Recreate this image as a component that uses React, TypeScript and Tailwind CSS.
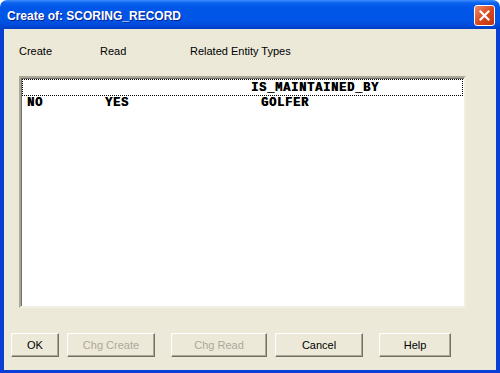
import React from "react";

function Btn({ label, w, disabled }: { label: string; w: string; disabled?: boolean }) {
  return (
    <div
      className={`${w} h-[24px] flex items-center justify-center border border-t-white border-l-white border-r-[#716F64] border-b-[#716F64] shadow-[inset_-1px_-1px_0_#ACA899] bg-[#ECE9D8] text-[11px] ${
        disabled ? "text-[#ACA899]" : "text-black"
      }`}
    >
      {label}
    </div>
  );
}

export default function App() {
  return (
    <div
      className="w-[500px] h-[373px] flex flex-col bg-white"
      style={{ fontFamily: '"Liberation Sans", Arial, sans-serif' }}
    >
      {/* Title bar */}
      <div className="h-[29px] flex items-center justify-between rounded-t-[7px] bg-[linear-gradient(to_bottom,#3D8DFF_0px,#0A62EC_3px,#0056E8_8px,#0055E6_20px,#0048D8_26px,#003CC0_29px)] pl-[7px] pr-[5px]">
        <span className="text-white font-bold text-[12px] pt-[3px] [text-shadow:1px_1px_0_#0A1E8A]">
          Create of: SCORING_RECORD
        </span>
        <div className="w-[21px] h-[21px] mt-[2px] rounded-[3px] border border-white bg-[linear-gradient(135deg,#F08A68,#D6461E_55%,#C0350F)] flex items-center justify-center">
          <svg width="11" height="11" viewBox="0 0 11 11">
            <path d="M1.5 1.5 L9.5 9.5 M9.5 1.5 L1.5 9.5" stroke="white" strokeWidth="2.2" strokeLinecap="square" />
          </svg>
        </div>
      </div>

      {/* Body */}
      <div className="flex-1 flex flex-col bg-[#ECE9D8] border-l-4 border-r-4 border-b-[3px] border-[#0A3FD6]">
        <div className="flex text-[11px] text-black pl-[15px] pt-[16px] leading-[13px]">
          <span className="w-[81px]">Create</span>
          <span className="w-[90px]">Read</span>
          <span>Related Entity Types</span>
        </div>

        <div className="ml-[15px] mt-[18px] w-[447px] h-[232px] bg-white border-2 border-t-[#ACA899] border-l-[#ACA899] border-r-[#F1EFE2] border-b-[#F1EFE2] shadow-[inset_1px_1px_0_#716F64]">
          <div
            className="text-black font-bold text-[12px] tracking-[0.8px] [text-shadow:0.4px_0_0_#000]"
            style={{ fontFamily: '"Liberation Mono", "DejaVu Sans Mono", monospace' }}
          >
            <div className="mx-[1px] mt-[1px] h-[17px] border border-dotted border-black flex items-end pl-[228px] leading-[12px] pb-[1px]">
              IS_MAINTAINED_BY
            </div>
            <div className="flex leading-[12px] pt-[1px]">
              <span className="w-[84px] pl-[6px]">NO</span>
              <span className="w-[156px]">YES</span>
              <span>GOLFER</span>
            </div>
          </div>
        </div>

        <div className="flex pl-[7px] mt-[25px]">
          <Btn label="OK" w="w-[48px]" />
          <div className="w-[8px]" />
          <Btn label="Chg Create" w="w-[88px]" disabled />
          <div className="w-[16px]" />
          <Btn label="Chg Read" w="w-[96px]" disabled />
          <div className="w-[8px]" />
          <Btn label="Cancel" w="w-[88px]" />
          <div className="w-[16px]" />
          <Btn label="Help" w="w-[72px]" />
        </div>
      </div>
    </div>
  );
}
